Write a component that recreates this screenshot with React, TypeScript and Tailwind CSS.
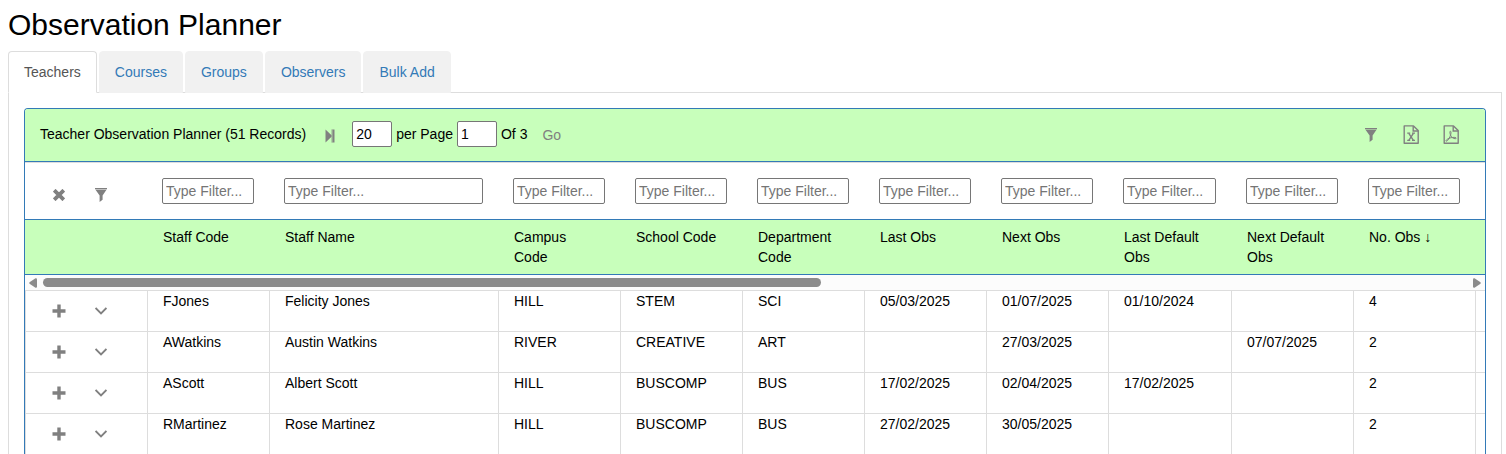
import { FormEvent, ReactNode } from 'react';

const tabs = ['Teachers', 'Courses', 'Groups', 'Observers', 'Bulk Add'];

const columns = [
  { label: 'Staff Code', width: 'w-[122px]' },
  { label: 'Staff Name', width: 'w-[229px]' },
  { label: 'Campus Code', width: 'w-[122px]' },
  { label: 'School Code', width: 'w-[122px]' },
  { label: 'Department Code', width: 'w-[122px]' },
  { label: 'Last Obs', width: 'w-[122px]' },
  { label: 'Next Obs', width: 'w-[122px]' },
  { label: 'Last Default Obs', width: 'w-[123px]' },
  { label: 'Next Default Obs', width: 'w-[122px]' },
  { label: 'No. Obs ↓', width: 'w-[122px]' },
];

const teachers = [
  ['FJones', 'Felicity Jones', 'HILL', 'STEM', 'SCI', '05/03/2025', '01/07/2025', '01/10/2024', '', '4'],
  ['AWatkins', 'Austin Watkins', 'RIVER', 'CREATIVE', 'ART', '', '27/03/2025', '', '07/07/2025', '2'],
  ['AScott', 'Albert Scott', 'HILL', 'BUSCOMP', 'BUS', '17/02/2025', '02/04/2025', '17/02/2025', '', '2'],
  ['RMartinez', 'Rose Martinez', 'HILL', 'BUSCOMP', 'BUS', '27/02/2025', '30/05/2025', '', '', '2'],
];

function FilterIcon() {
  return (
    <svg width="12" height="14" viewBox="0 0 12 14" fill="currentColor" aria-hidden="true">
      <path d="M0 0h12v1.2H0zM0.5 1.8h11L7.6 7.5v4.3L4.6 14V7.5z" />
    </svg>
  );
}

function FileIcon({ children }: { children: ReactNode }) {
  return (
    <svg width="18" height="20" viewBox="0 0 18 20" fill="none" stroke="currentColor" strokeWidth="1.4" aria-hidden="true">
      <path d="M2.2 0.9h9.3l4.7 4.7v12.6H2.2z" strokeLinejoin="round" />
      <path d="M11.2 1v5h5" />
      {children}
    </svg>
  );
}

function IconButton({ label, children }: { label: string; children: ReactNode }) {
  return (
    <button type="button" aria-label={label} className="flex h-6 w-6 items-center justify-center text-[#808080]">
      {children}
    </button>
  );
}

function ColumnWidths() {
  return (
    <colgroup>
      <col className="w-[122px]" />
      {columns.map((column) => (
        <col key={column.label} className={column.width} />
      ))}
      <col />
    </colgroup>
  );
}

function Toolbar() {
  const handleSubmit = (e: FormEvent) => e.preventDefault();

  return (
    <div className="flex h-[53px] items-center justify-between border-b border-[#337ab7] bg-[#c8ffbb] px-[15px]">
      <form onSubmit={handleSubmit} className="flex h-[26px] items-center pb-0.5">
        <span>Teacher Observation Planner (51 Records)</span>
        <div className="ml-3 mr-2.5 pt-1">
          <IconButton label="Last page">
            <svg width="10" height="14" viewBox="0 0 10 14" fill="currentColor" aria-hidden="true">
              <path d="M0.5 0.5L6.5 6.2V0.5H9.5v13h-3V7.8L0.5 13.5z" />
              <path d="M7 0.5v13" stroke="#c8ffbb" strokeWidth="0.6" />
            </svg>
          </IconButton>
        </div>
        <input aria-label="Records per page" defaultValue="20" className="h-[26px] w-10 rounded-xs border border-[#767676] bg-white px-[3px]" />
        <span className="mx-1">per Page</span>
        <input aria-label="Page number" defaultValue="1" className="h-[26px] w-10 rounded-xs border border-[#767676] bg-white px-[3px]" />
        <span className="ml-1">Of 3</span>
        <button type="submit" className="ml-[15px] pt-0.5 text-[#808080]">Go</button>
      </form>
      <div className="flex gap-4 pr-[7px]">
        <IconButton label="Toggle filters">
          <FilterIcon />
        </IconButton>
        <IconButton label="Export to Excel">
          <FileIcon>
            <path d="M5.2 8.2h3M10 8.2h3M5.2 15.3h3M10 15.3h3" strokeWidth="1.2" />
            <path d="M6.8 8.3l4.6 7M11.4 8.3l-4.6 7" />
          </FileIcon>
        </IconButton>
        <IconButton label="Export to PDF">
          <FileIcon>
            <path d="M8.4 6.2c-0.9 0-0.5 2.6 0.3 4.2 0.9 2 2.6 3.3 4.6 3.3 1.4 0 1.2-1.2-0.4-1.3-2.8-0.2-5.4 0.5-7.4 1.7-1.8 1.1-1.8 2.3-1 2.1 1.4-0.4 3.4-3.8 4.2-6.6 0.5-1.8 0.4-3.4-0.3-3.4z" strokeWidth="1" />
          </FileIcon>
        </IconButton>
      </div>
    </div>
  );
}

function PlannerTable() {
  return (
    <div className="overflow-hidden">
      <table className="w-full min-w-[1452px] table-fixed border-separate border-spacing-0 text-left">
        <ColumnWidths />
        <thead>
          <tr className="h-[58px] align-top">
            <td className="border-t border-b border-t-[#ddd] border-b-[#337ab7] pt-5 pl-[22px]">
              <div className="flex gap-[18px]">
                <IconButton label="Clear filters">
                  <svg width="12" height="12" viewBox="0 0 12 12" stroke="currentColor" strokeWidth="3.8" aria-hidden="true">
                    <path d="M1.2 1.2l9.6 9.6M10.8 1.2l-9.6 9.6" />
                  </svg>
                </IconButton>
                <IconButton label="Apply filters">
                  <FilterIcon />
                </IconButton>
              </div>
            </td>
            {columns.map((column) => (
              <td key={column.label} className="border-t border-b border-t-[#ddd] border-b-[#337ab7] px-[15px] pt-[15px]">
                <input
                  aria-label={`Filter ${column.label}`}
                  placeholder="Type Filter..."
                  className="block h-[26px] w-full rounded-xs border border-[#767676] px-[3px] placeholder:text-[#757575]"
                />
              </td>
            ))}
            <td className="border-t border-b border-t-[#ddd] border-b-[#337ab7]" />
          </tr>
          <tr className="h-[55px] bg-[#c8ffbb] align-top">
            <td className="border-b border-[#337ab7]" />
            {columns.map((column) => (
              <th key={column.label} scope="col" className="border-b border-[#337ab7] pt-[7px] pr-5 pl-4 font-normal">
                {column.label}
              </th>
            ))}
            <td className="border-b border-[#337ab7]" />
          </tr>
        </thead>
      </table>

      {/* Horizontal scroll track */}
      <div className="flex h-[15px] items-center gap-1.5 bg-[#fcfcfc] px-1 text-[#8b8b8b]">
        <svg width="8" height="10" viewBox="0 0 8 10" fill="currentColor" aria-hidden="true">
          <path d="M0.5 4.2L6.5 0.3Q8 0 8 1.5v7Q8 10 6.5 9.7L0.5 5.8Q0 5 0.5 4.2z" />
        </svg>
        <div className="flex-1">
          <div className="h-[9px] w-[54.6%] rounded-full bg-[#8b8b8b]" />
        </div>
        <svg width="8" height="10" viewBox="0 0 8 10" fill="currentColor" aria-hidden="true">
          <path d="M7.5 4.2L1.5 0.3Q0 0 0 1.5v7Q0 10 1.5 9.7L7.5 5.8Q8 5 7.5 4.2z" />
        </svg>
      </div>

      <table className="w-full min-w-[1452px] table-fixed border-separate border-spacing-0 text-left">
        <ColumnWidths />
        <tbody>
          {teachers.map((cells) => (
            <tr key={cells[0]} className="h-[41px] align-top">
              <td className="border-t border-l border-[#ddd] pt-2 pl-[21px]">
                <div className="flex gap-[18px]">
                  <IconButton label={`Add observation for ${cells[1]}`}>
                    <svg width="14" height="14" viewBox="0 0 14 14" stroke="currentColor" strokeWidth="3.4" aria-hidden="true">
                      <path d="M7 0.5v13M0.5 7h13" />
                    </svg>
                  </IconButton>
                  <IconButton label={`Show ${cells[1]}`}>
                    <svg width="12" height="8" viewBox="0 0 12 8" fill="none" stroke="currentColor" strokeWidth="1.8" aria-hidden="true">
                      <path d="M0.6 1l5.4 5.4L11.4 1" />
                    </svg>
                  </IconButton>
                </div>
              </td>
              {cells.map((cell, i) => (
                <td key={columns[i].label} className="border-t border-l border-[#ddd] px-[15px]">
                  {cell}
                </td>
              ))}
              <td className="border-t border-l border-[#ddd]" />
            </tr>
          ))}
        </tbody>
      </table>
    </div>
  );
}

export default function App() {
  return (
    <div className="h-screen overflow-hidden bg-white pt-2 pr-1 pl-2 font-['Liberation_Sans',Arial,sans-serif] text-sm leading-5 text-black">
      <h1 className="mb-2.5 text-[30px] leading-[33px]">Observation Planner</h1>

      {/* Tabs */}
      <nav className="flex gap-0.5 border-b border-[#ddd]">
        {tabs.map((tab, i) => (
          <a
            key={tab}
            href="#"
            className={
              i === 0
                ? '-mb-px rounded-t border border-[#ddd] border-b-white bg-white px-[15px] py-2.5 text-[#555]'
                : '-mb-px rounded-t border border-[#f1f1f1] bg-[#f1f1f1] px-[15px] py-2.5 text-[#337ab7]'
            }
          >
            {tab}
          </a>
        ))}
      </nav>

      <main className="border-x border-[#ddd] p-[15px]">
        <section className="overflow-hidden rounded-t border-x border-t border-[#337ab7]">
          <Toolbar />
          <PlannerTable />
        </section>
      </main>
    </div>
  );
}
